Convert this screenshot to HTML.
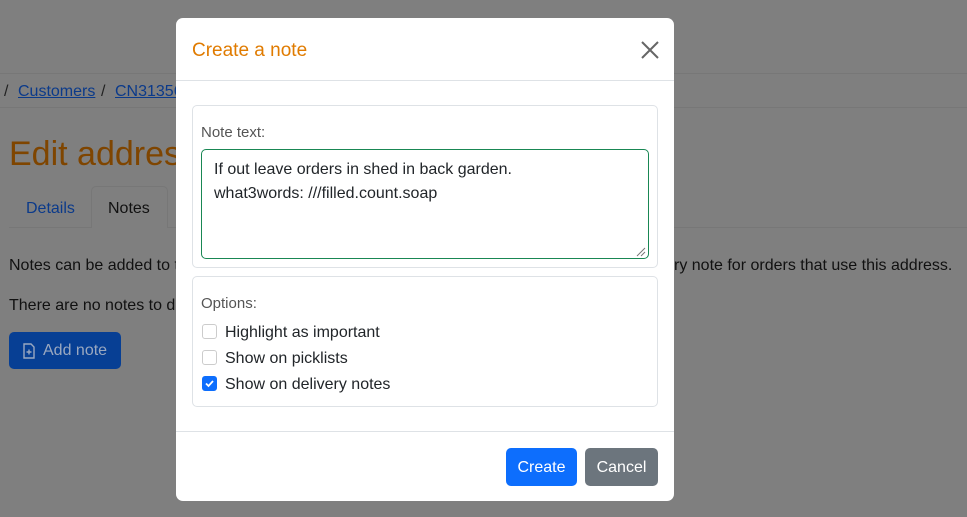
<!DOCTYPE html><html><head><style>
body{margin:0;width:967px;height:517px;position:relative;overflow:hidden;background:#7f7f7f;font-family:"Liberation Sans",sans-serif;}
.a{position:absolute;white-space:nowrap}
.bg{color:#111;font-size:16px}
.lnk{color:#0b3a8a;text-decoration:underline}
.m{position:absolute;left:176px;top:18px;width:498px;height:483px;background:#fff;border-radius:7px}
.box{position:absolute;border:1px solid #dee2e6;border-radius:5px}
.cb{position:absolute;left:9px;width:15px;height:15px;border:1px solid #ccc;border-radius:3px;box-sizing:border-box}
</style></head><body>
<div class="a" style="left:0;top:73px;width:967px;height:33px;border-top:1px solid #777;border-bottom:1px solid #777"></div>
<div class="a bg" style="left:4px;top:83px;color:#222">/</div>
<div class="a bg lnk" style="left:18px;top:83px">Customers</div>
<div class="a bg" style="left:101px;top:83px;color:#222">/</div>
<div class="a bg lnk" style="left:115px;top:83px">CN31356</div>
<div class="a" style="left:9px;top:135px;font-size:34px;color:#7f4500">Edit address</div>
<div class="a" style="left:9px;top:227px;width:958px;border-top:1px solid #777"></div>
<div class="a" style="left:91px;top:186px;width:75px;height:41px;border:1px solid #777;border-bottom:none;border-radius:5px 5px 0 0;background:#7f7f7f"></div>
<div class="a bg" style="left:26px;top:200px;color:#0b3a8a">Details</div>
<div class="a bg" style="left:108px;top:200px">Notes</div>
<div class="a bg" style="left:9px;top:257px">Notes can be added to t</div>
<div class="a bg" style="left:674px;top:257px">ry note for orders that use this address.</div>
<div class="a bg" style="left:9px;top:297px">There are no notes to di</div>
<div class="a" style="left:9px;top:332px;width:112px;height:37px;background:#073f94;border-radius:5px;color:#9aa8c0;font-size:16px;line-height:37px;text-indent:34px">Add note</div>
<svg class="a" style="left:23px;top:343px" width="12" height="16"><path d="M1 1H8L11 4V15H1Z" stroke="#9aa8c0" stroke-width="1.4" fill="none"/><path d="M6 6.5V11.5M3.5 9H8.5" stroke="#9aa8c0" stroke-width="1.4"/></svg>
<div class="m">
<div class="a" style="left:16px;top:22px;font-size:19px;color:#e07b00">Create a note</div>
<svg class="a" style="left:464px;top:22px" width="20" height="20"><path d="M2 2L18 18M18 2L2 18" stroke="#666" stroke-width="2"/></svg>
<div class="a" style="left:0;top:62px;width:498px;border-top:1px solid #dee2e6"></div>
<div class="box" style="left:16px;top:87px;width:464px;height:161px">
<div class="a" style="left:8px;top:18px;font-size:15px;color:#555">Note text:</div>
<div class="a" style="left:8px;top:43px;width:448px;height:110px;border:1px solid #198754;border-radius:5px;font-size:16px;color:#212529;line-height:24px;padding:8px 12px;box-sizing:border-box">If out leave orders in shed in back garden.<br>what3words: ///filled.count.soap</div>
<svg class="a" style="left:443px;top:141px" width="10" height="10"><path d="M9 1L1 9M9 5L5 9" stroke="#777"/></svg>
</div>
<div class="box" style="left:16px;top:258px;width:464px;height:129px">
<div class="a" style="left:8px;top:18px;font-size:15px;color:#555">Options:</div>
<div class="cb" style="top:47px"></div><div class="a" style="left:32px;top:47px;font-size:16px;color:#212529">Highlight as important</div>
<div class="cb" style="top:73px"></div><div class="a" style="left:32px;top:73px;font-size:16px;color:#212529">Show on picklists</div>
<div class="cb" style="top:99px;background:#0d6efd;border-color:#0d6efd"></div>
<svg class="a" style="left:12px;top:102px" width="9" height="9"><path d="M1 4.5L3.5 7L8 2" stroke="#fff" stroke-width="1.8" fill="none"/></svg>
<div class="a" style="left:32px;top:99px;font-size:16px;color:#212529">Show on delivery notes</div>
</div>
<div class="a" style="left:0;top:413px;width:498px;border-top:1px solid #dee2e6"></div>
<div class="a" style="left:330px;top:430px;width:71px;height:38px;background:#0d6efd;border-radius:5px;color:#fff;font-size:16px;line-height:40px;text-align:center">Create</div>
<div class="a" style="left:409px;top:430px;width:73px;height:38px;background:#6c757d;border-radius:5px;color:#fff;font-size:16px;line-height:40px;text-align:center">Cancel</div>
</div>
</body></html>
